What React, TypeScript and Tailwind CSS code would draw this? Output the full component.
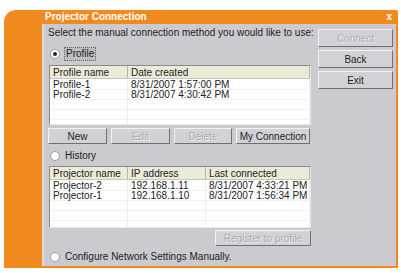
import React from "react";

const font = { fontFamily: '"Liberation Sans", Arial, sans-serif' };

function Radio({ checked, label, focus }: { checked?: boolean; label: string; focus?: boolean }) {
  return (
    <div className="flex items-center h-[12px] pl-[3px]">
      <span className="w-[10px] h-[10px] rounded-full bg-white border border-[#9a9a9a] flex items-center justify-center">
        {checked && <span className="w-[4px] h-[4px] rounded-full bg-[#222]" />}
      </span>
      <span
        className={
          "ml-[4px] text-[10px] leading-[12px] text-[#222] px-[1px] " +
          (focus ? "bg-[#bdbdc2] border border-dotted border-[#666]" : "")
        }
      >
        {label}
      </span>
    </div>
  );
}

function Btn({ label, disabled, className }: { label: string; disabled?: boolean; className?: string }) {
  return (
    <div
      className={
        "flex items-center justify-center bg-[#d2d2d6] border border-t-[#f2f2f2] border-l-[#f2f2f2] border-b-[#6f6f6f] border-r-[#6f6f6f] text-[10px] " +
        (disabled ? "text-[#a9a9ad] [text-shadow:1px_1px_0_#f0f0f0]" : "text-[#222]") +
        " " +
        (className || "")
      }
    >
      {label}
    </div>
  );
}

function Table({
  cols,
  widths,
  rows,
  height,
}: {
  cols: string[];
  widths: number[];
  rows: string[][];
  height: number;
}) {
  const blank = 6 - rows.length;
  const all = [...rows, ...Array.from({ length: blank }, () => cols.map(() => ""))];
  return (
    <div
      className="bg-white border border-t-[#8a8a8a] border-l-[#8a8a8a] border-b-[#e8e8e8] border-r-[#e8e8e8] overflow-hidden w-[262px]"
      style={{ height }}
    >
      <div className="flex h-[13px] bg-[#ecead9] border-b border-[#c9c6b4]">
        {cols.map((c, i) => (
          <div
            key={i}
            className="h-full text-[10px] leading-[13px] text-[#222] pl-[3px] border-r border-[#b9b6a4]"
            style={{ width: widths[i] }}
          >
            {c}
          </div>
        ))}
      </div>
      <div className="pt-[1px]">
        {all.map((r, ri) => (
          <div key={ri} className="flex h-[10px] border-b border-[#f0f0f0]">
            {r.map((c, ci) => (
              <div
                key={ci}
                className="h-full text-[10px] leading-[10px] text-[#222] pl-[3px] border-r border-[#ededed] whitespace-nowrap"
                style={{ width: widths[ci] }}
              >
                {c}
              </div>
            ))}
          </div>
        ))}
      </div>
    </div>
  );
}

export default function App() {
  return (
    <div className="w-[401px] h-[273px] bg-white pt-[10px] pl-[4px]" style={font}>
      <div className="w-[394px] h-[258px] bg-[#f28b1f] rounded-tl-[12px] rounded-tr-[2px] flex flex-col">
        <div className="h-[14px] flex items-center pl-[41px] pr-[6px]">
          <span className="text-white font-bold text-[10px] leading-[14px] flex-1">
            Projector Connection
          </span>
          <span className="text-white font-bold text-[10px] leading-[14px]">x</span>
        </div>
        <div className="flex flex-1 pb-[2px] pr-[2px]">
          <div className="w-[38px]" />
          <div className="flex-1 bg-[#cbcbcf] border-l-2 border-[#dcdce0] flex">
            <div className="w-[272px] pl-[3px] pt-[3px] flex flex-col">
              <div className="h-[12px] text-[10px] leading-[12px] text-[#222] pl-[1px] whitespace-nowrap">
                Select the manual connection method you would like to use:
              </div>
              <div className="mt-[9px]">
                <Radio checked label="Profile" focus />
              </div>
              <div className="mt-[5px] pl-[2px]">
                <Table
                  cols={["Profile name", "Date created"]}
                  widths={[78, 182]}
                  rows={[
                    ["Profile-1", "8/31/2007 1:57:00 PM"],
                    ["Profile-2", "8/31/2007 4:30:42 PM"],
                  ]}
                  height={60}
                />
              </div>
              <div className="mt-[3px] pl-[1px] flex gap-[4px] h-[16px]">
                <Btn label="New" className="w-[59px]" />
                <Btn label="Edit" disabled className="w-[59px]" />
                <Btn label="Delete" disabled className="w-[58px]" />
                <Btn label="My Connection" className="w-[74px]" />
              </div>
              <div className="mt-[6px]">
                <Radio label="History" />
              </div>
              <div className="mt-[4px] pl-[2px]">
                <Table
                  cols={["Projector name", "IP address", "Last connected"]}
                  widths={[78, 78, 104]}
                  rows={[
                    ["Projector-2", "192.168.1.11", "8/31/2007 4:33:21 PM"],
                    ["Projector-1", "192.168.1.10", "8/31/2007 1:56:34 PM"],
                  ]}
                  height={62}
                />
              </div>
              <div className="mt-[2px] flex justify-end pr-[5px]">
                <Btn label="Register to profile" disabled className="w-[96px] h-[16px]" />
              </div>
              <div className="mt-[5px]">
                <Radio label="Configure Network Settings Manually." />
              </div>
            </div>
            <div className="flex flex-col pt-[5px] pl-[2px] gap-[3px]">
              <Btn label="Connect" disabled className="w-[75px] h-[18px]" />
              <Btn label="Back" className="w-[75px] h-[18px]" />
              <Btn label="Exit" className="w-[75px] h-[18px]" />
            </div>
          </div>
        </div>
      </div>
    </div>
  );
}
